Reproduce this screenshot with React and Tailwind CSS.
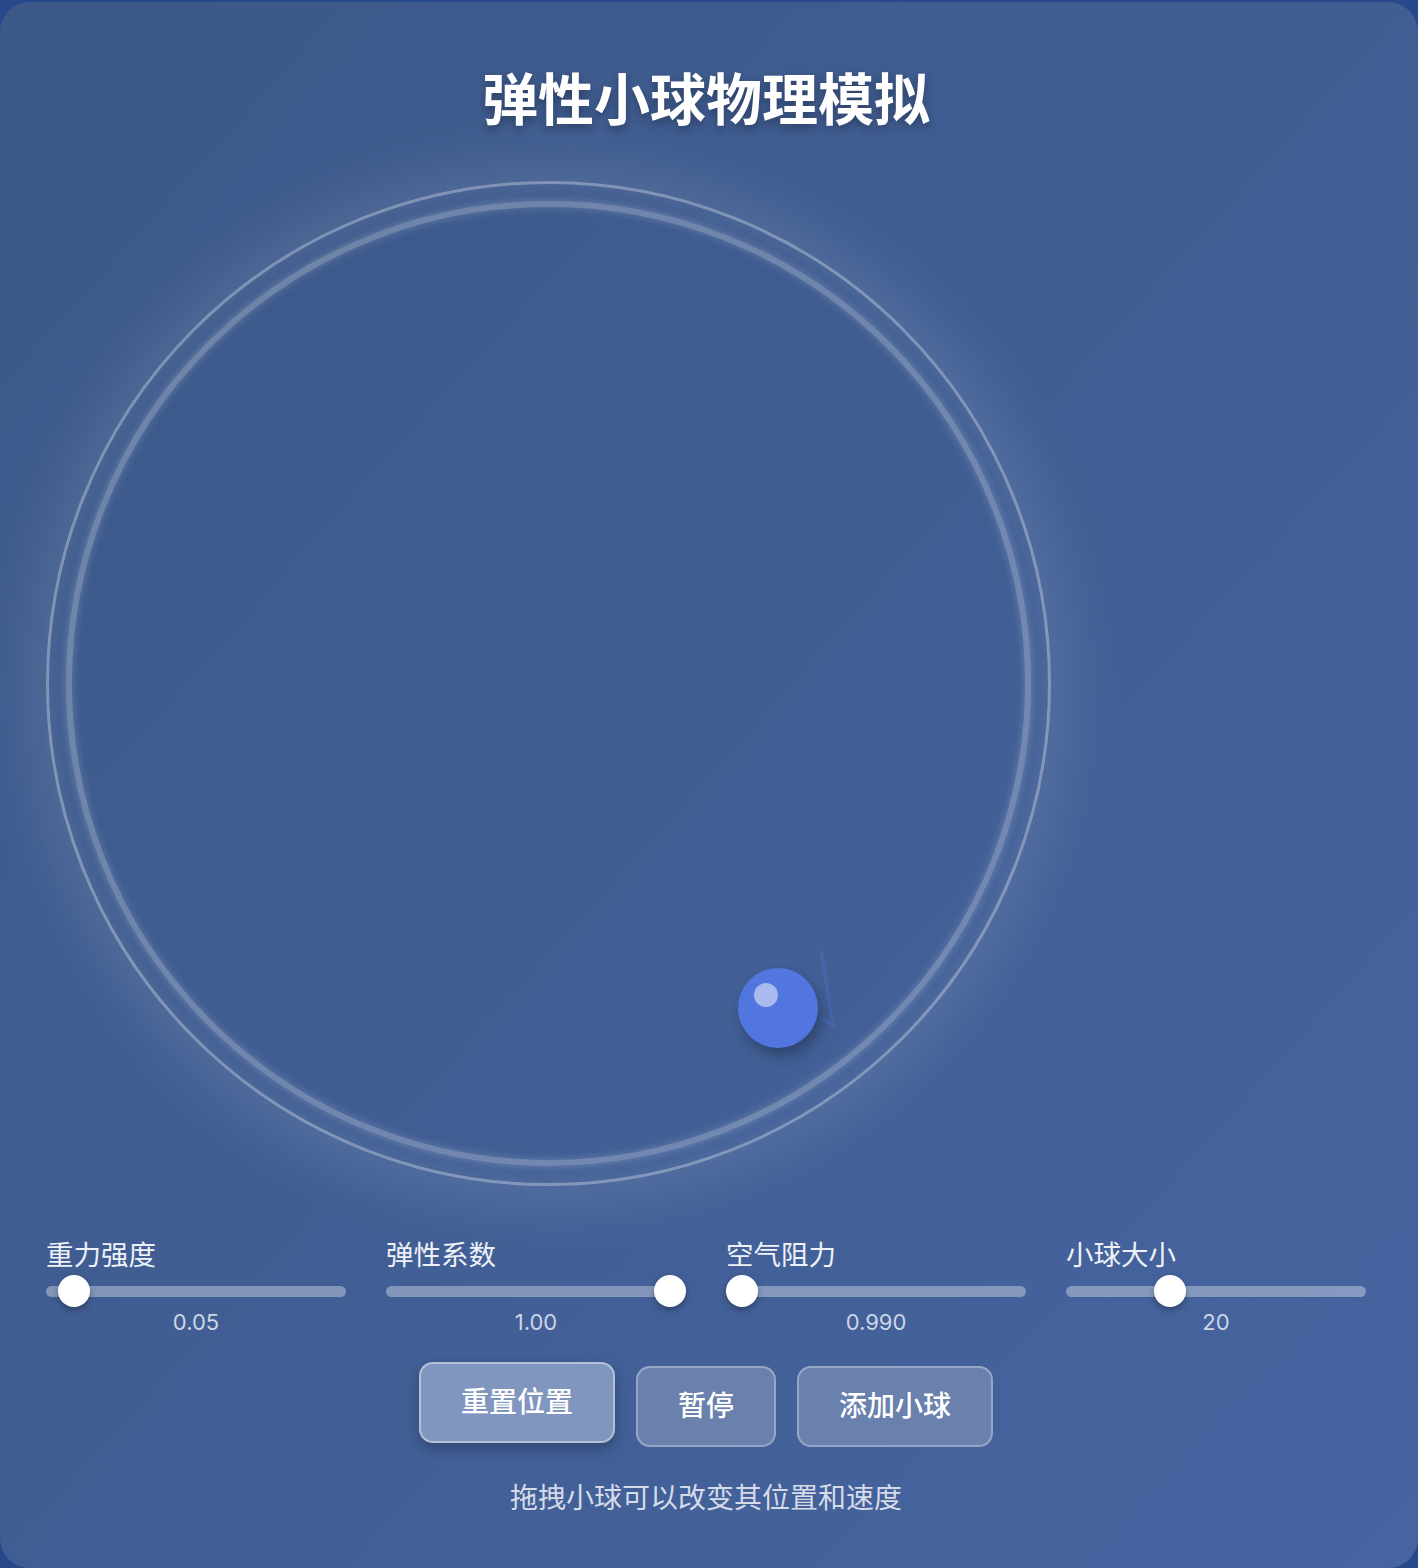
import React, { useState } from 'react';

const font = { fontFamily: '"Inter", "Noto Sans CJK SC", sans-serif' };

const sliders = [
  { label: '重力强度', value: '0.05', pct: 0.045 },
  { label: '弹性系数', value: '1.00', pct: 1 },
  { label: '空气阻力', value: '0.990', pct: 0 },
  { label: '小球大小', value: '20', pct: 0.33 },
];

function Slider({ label, value, pct }) {
  return (
    <div className="flex flex-col">
      <div className="text-[27.5px] leading-[31px] text-[#eef1f8]">{label}</div>
      <div className="relative mt-[4px] h-[32px] flex items-center">
        <div className="h-[11px] w-full rounded-full bg-white/35" />
        <div
          className="absolute top-0 h-[32px] w-[32px] rounded-full bg-white shadow-[0_3px_6px_rgba(0,0,0,0.3)]"
          style={{ left: `calc(${pct} * (100% - 32px))` }}
        />
      </div>
      <div className="mt-[2px] text-center text-[22px] leading-[26px] text-[#cdd5e6]">{value}</div>
    </div>
  );
}

export default function App() {
  const [paused, setPaused] = useState(false);

  return (
    <div className="min-h-screen bg-[#27488a] pt-[2px]" style={font}>
      <div className="h-[1566px] rounded-[30px] bg-gradient-to-br from-[#3c5888] to-[#4664a0] pl-[46px] pr-[52px] pt-[65px]">
        <h1 className="text-center text-[56px] font-bold leading-[67px] text-white [text-shadow:0_4px_8px_rgba(0,0,0,0.3)]">
          弹性小球物理模拟
        </h1>

        {/* simulation canvas */}
        <div className="relative mt-[47px] h-[1005px] w-[1005px] rounded-full border-[3px] border-white/35 shadow-[0_0_70px_12px_rgba(255,255,255,0.13),inset_0_0_30px_rgba(255,255,255,0.12)]">
          <div className="absolute inset-[17px] rounded-full border-[6px] border-white/25 shadow-[0_0_8px_rgba(255,255,255,0.25),inset_0_0_8px_rgba(255,255,255,0.2)]" />
          <svg className="absolute left-0 top-0" width="1005" height="1005">
            <polyline points="772,766 784,842 774,834" fill="none" stroke="#4d6cc4" strokeWidth="3" strokeOpacity="0.5" />
          </svg>
          <div className="absolute left-[689px] top-[784px] h-[80px] w-[80px] rounded-full bg-[#5176e0] shadow-[4px_8px_14px_rgba(0,0,0,0.28)]">
            <div className="absolute left-[16px] top-[15px] h-[24px] w-[24px] rounded-full bg-[#aab9ee]" />
          </div>
        </div>

        <div className="mt-[54px] grid grid-cols-4 gap-[40px]">
          {sliders.map((s) => (
            <Slider key={s.label} {...s} />
          ))}
        </div>

        <div className="mt-[31px] flex justify-center gap-[21px]">
          <button className="-translate-y-[4px] rounded-[14px] border-2 border-white/40 bg-[#8196bf] px-[40px] text-[28px] font-medium leading-[77px] text-white shadow-[0_6px_14px_rgba(0,0,0,0.25)]">
            重置位置
          </button>
          <button
            onClick={() => setPaused(!paused)}
            className="rounded-[14px] border-2 border-white/30 bg-[#6a80ad] px-[40px] text-[28px] font-medium leading-[77px] text-white"
          >
            {paused ? '继续' : '暂停'}
          </button>
          <button className="rounded-[14px] border-2 border-white/30 bg-[#6a80ad] px-[40px] text-[28px] font-medium leading-[77px] text-white">
            添加小球
          </button>
        </div>

        <p className="mt-[34px] text-center text-[28px] leading-[34px] text-[#d5dbe8]">
          拖拽小球可以改变其位置和速度
        </p>
      </div>
    </div>
  );
}
